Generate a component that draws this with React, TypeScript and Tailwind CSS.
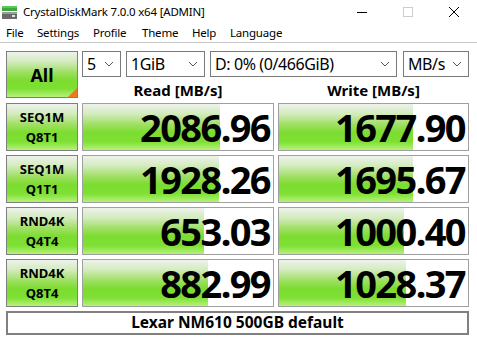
import React from "react";

const rows = [
  { l1: "SEQ1M", l2: "Q8T1", r: "2086.96", rw: 137, w: "1677.90", ww: 134 },
  { l1: "SEQ1M", l2: "Q1T1", r: "1928.26", rw: 136, w: "1695.67", ww: 134 },
  { l1: "RND4K", l2: "Q4T4", r: "653.03", rw: 121, w: "1000.40", ww: 125 },
  { l1: "RND4K", l2: "Q8T4", r: "882.99", rw: 125, w: "1028.37", ww: 127 },
];

const grad =
  "bg-[linear-gradient(180deg,#eef2ec_0%,#d2ebbc_22%,#9ee062_45%,#7ddc30_62%,#7ee034_82%,#b6f27a_100%)]";

function Chevron() {
  return (
    <svg width="10" height="6" viewBox="0 0 10 6" className="shrink-0">
      <path d="M1 1 L5 5 L9 1" fill="none" stroke="#555" strokeWidth="1" />
    </svg>
  );
}

function Combo({ text, w }: { text: string; w: string }) {
  return (
    <div className={`${w} h-[26px] border border-[#7a7a7a] bg-white flex items-center justify-between pl-[4px] pr-[6px]`}>
      <span className="text-[16px] leading-none tracking-[-0.4px] text-black whitespace-nowrap">{text}</span>
      <Chevron />
    </div>
  );
}

function ValueBox({ v, bw }: { v: string; bw: number }) {
  return (
    <div className="relative h-[48px] border border-[#a0a0a0] bg-white">
      <div className={`absolute left-0 top-0 bottom-0 ${grad}`} style={{ width: bw }} />
      <div className="relative h-full flex items-center justify-end pr-[3px]">
        <span className="font-bold text-[38px] leading-none tracking-[-1.6px] text-black whitespace-nowrap">{v}</span>
      </div>
    </div>
  );
}

const menu: [string, string][] = [
  ["File", "w-[31px]"],
  ["Settings", "w-[56px]"],
  ["Profile", "w-[49px]"],
  ["Theme", "w-[50px]"],
  ["Help", "w-[38px]"],
  ["Language", "w-[60px]"],
];

export default function App() {
  return (
    <div
      className="w-[477px] h-[342px] bg-white overflow-hidden text-black"
      style={{ fontFamily: '"Noto Sans", "Open Sans", sans-serif' }}
    >
      {/* title bar */}
      <div className="h-[24px] flex items-center relative">
        <svg width="16" height="14" viewBox="0 0 16 14" className="ml-[2px] mt-[1px]">
          <rect x="0" y="0" width="15" height="5" fill="#3aa83a" />
          <rect x="0" y="0" width="15" height="2" fill="#5cc85c" />
          <rect x="0" y="6" width="15" height="7" fill="#6a6a6a" />
          <rect x="0" y="6" width="15" height="2" fill="#9a9a9a" />
          <rect x="10" y="9" width="3" height="2" fill="#e0e0e0" />
        </svg>
        <span className="ml-[5px] text-[11.5px] leading-none tracking-[-0.2px] whitespace-nowrap">
          CrystalDiskMark 7.0.0 x64 [ADMIN]
        </span>
        <div className="ml-auto flex items-center h-full">
          <div className="w-[46px] flex justify-center">
            <div className="w-[10px] h-px bg-black" />
          </div>
          <div className="w-[46px] flex justify-center">
            <div className="w-[10px] h-[10px] border border-[#cccccc]" />
          </div>
          <div className="w-[46px] flex justify-center">
            <svg width="10" height="10" viewBox="0 0 10 10">
              <path d="M0 0 L10 10 M10 0 L0 10" stroke="#000" strokeWidth="1" />
            </svg>
          </div>
        </div>
      </div>
      {/* menu */}
      <div className="h-[19px] flex items-center pl-[6px] text-[11.5px] leading-none tracking-[-0.2px] border-b border-[#c8c8c8]">
        {menu.map(([t, w]) => (
          <span key={t} className={`${w} whitespace-nowrap`}>
            {t}
          </span>
        ))}
      </div>
      {/* body */}
      <div className="pt-[8px] pl-[6px] pr-[8px] flex flex-col">
        <div className="flex gap-[4px]">
          <div className={`relative w-[72px] h-[47px] border border-[#7f7f7f] ${grad} flex items-center justify-center`}>
            <span className="font-bold text-[18px] leading-none">All</span>
            <div className="absolute right-0 bottom-0 w-0 h-0 border-l-[9px] border-l-transparent border-b-[9px] border-b-[#f07820]" />
          </div>
          <div className="flex flex-col">
            <div className="flex">
              <Combo text="5" w="w-[39px]" />
              <div className="w-[5px]" />
              <Combo text="1GiB" w="w-[79px]" />
              <div className="w-[5px]" />
              <Combo text="D: 0% (0/466GiB)" w="w-[187px]" />
              <div className="w-[6px]" />
              <Combo text="MB/s" w="w-[66px]" />
            </div>
            <div className="flex gap-[4px] h-[21px] items-end">
              <div className="w-[192px] text-center font-bold text-[15px] leading-[15px]">Read [MB/s]</div>
              <div className="w-[191px] text-center font-bold text-[15px] leading-[15px]">Write [MB/s]</div>
            </div>
          </div>
        </div>
        <div className="mt-[5px] flex flex-col gap-[4px]">
          {rows.map((r) => (
            <div key={r.l1 + r.l2} className="grid grid-cols-[72px_192px_191px] gap-[4px]">
              <div className={`h-[48px] border border-[#7f7f7f] ${grad} flex flex-col items-center justify-center`}>
                <span className="font-bold text-[13px] leading-[20px]">{r.l1}</span>
                <span className="font-bold text-[13px] leading-[20px]">{r.l2}</span>
              </div>
              <ValueBox v={r.r} bw={r.rw} />
              <ValueBox v={r.w} bw={r.ww} />
            </div>
          ))}
        </div>
        <div className="mt-[4px] w-[463px] h-[24px] border-2 border-[#808080] flex items-center justify-center">
          <span className="font-bold text-[15.5px] leading-none">Lexar NM610 500GB default</span>
        </div>
      </div>
    </div>
  );
}
